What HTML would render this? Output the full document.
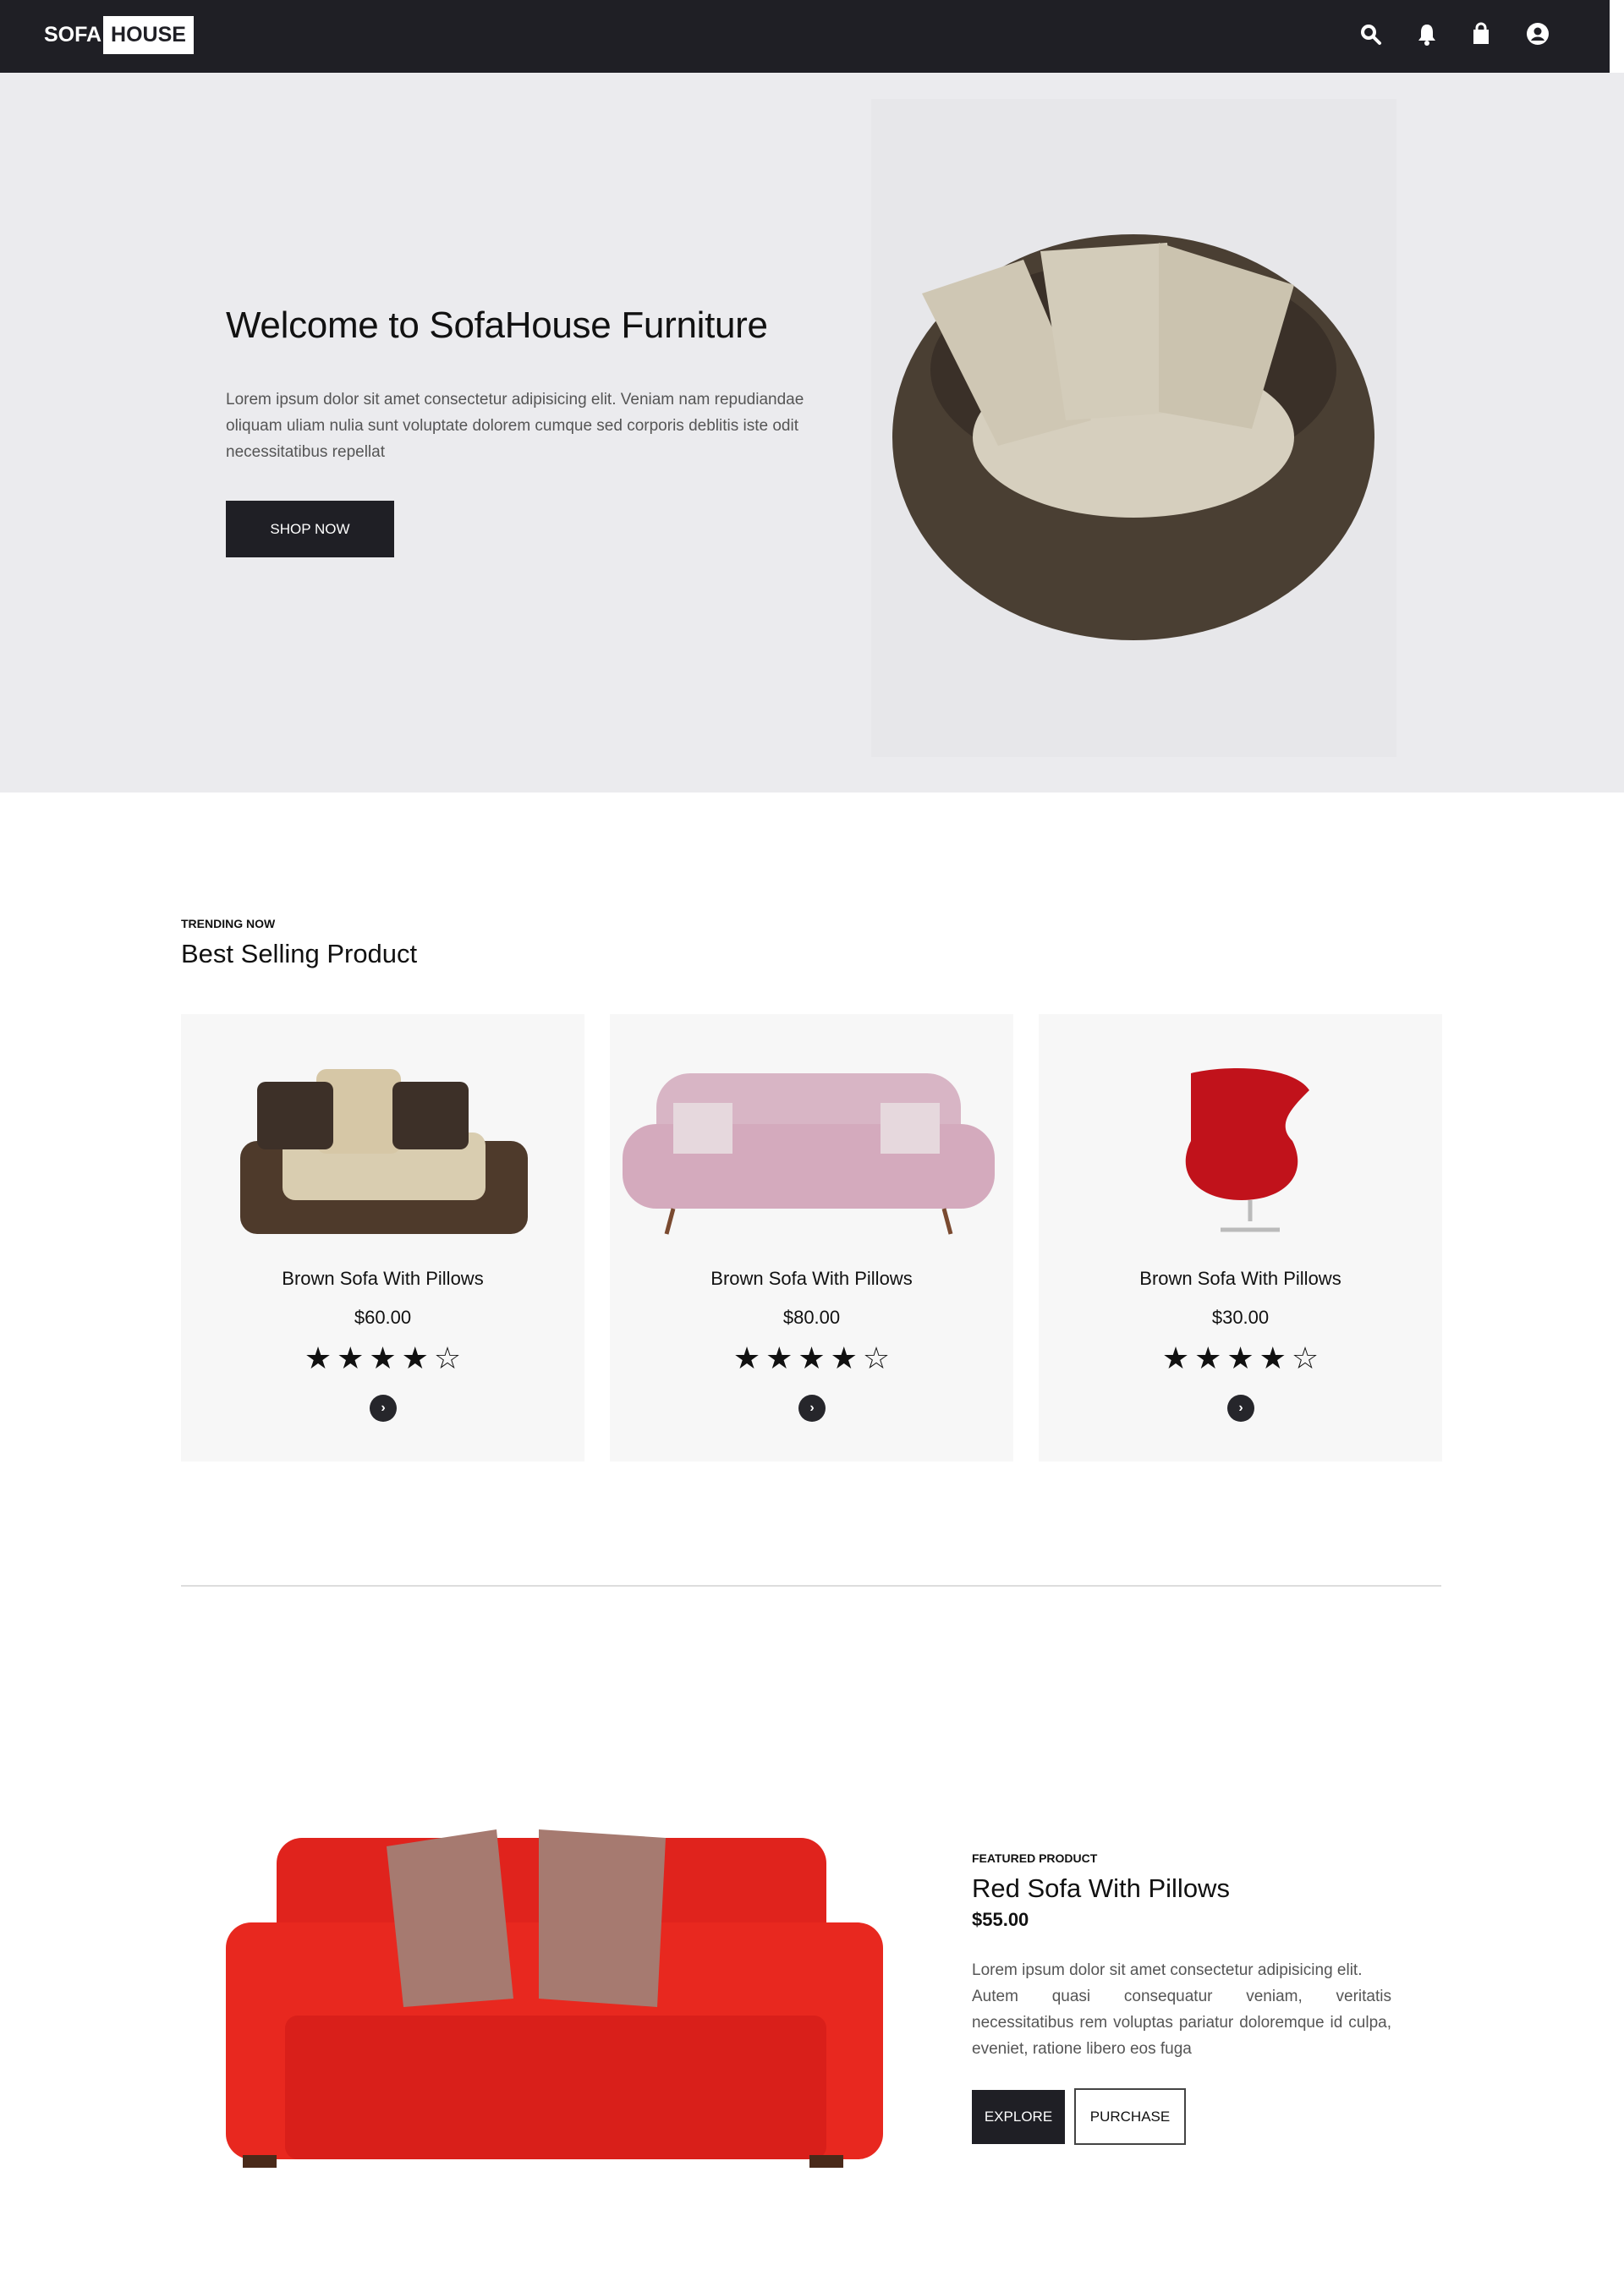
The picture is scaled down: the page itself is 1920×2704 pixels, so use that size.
<!DOCTYPE html>
<html><head><meta charset="utf-8"><style>
*{margin:0;padding:0;box-sizing:border-box}
body{width:1920px;height:2704px;background:#fff;font-family:"Liberation Sans",sans-serif;color:#111;position:relative;overflow:hidden}
.abs{position:absolute}
nav{position:absolute;left:0;top:0;width:1903px;height:86px;background:#1f1f25}
.hero{position:absolute;left:0;top:86px;width:1920px;height:851px;background:#ebebee}
p.lorem{color:#555;font-size:19px;line-height:31px}
.card{position:absolute;top:1199px;width:477px;height:529px;background:#f7f7f7;text-align:center}
.card h4{position:absolute;top:300px;width:100%;font-size:22px;font-weight:normal}
.card .pr{position:absolute;top:346px;width:100%;font-size:22px}
.card .st{position:absolute;top:386px;width:100%;font-size:36px;letter-spacing:6px;padding-left:6px}
.card .ar{position:absolute;top:450px;left:223px;width:32px;height:32px;border-radius:50%;background:#26262b;color:#fff;font-size:16px;line-height:31px;font-weight:bold}
.btn{position:absolute;font-size:17px;text-align:center}
</style></head><body>
<nav>
<div class="abs" style="left:52px;top:27px;color:#fff;font-weight:bold;font-size:25px">SOFA</div>
<div class="abs" style="left:122px;top:19px;width:107px;height:45px;background:#fff;color:#1f1f25;font-weight:bold;font-size:25px;line-height:45px;text-align:center">HOUSE</div>
<svg class="abs" style="left:1608px;top:28px" width="26" height="26" viewBox="0 0 26 26"><circle cx="10" cy="10" r="7" stroke="#fff" stroke-width="4" fill="none"/><path d="M15 15l8 8" stroke="#fff" stroke-width="4" stroke-linecap="round"/></svg>
<svg class="abs" style="left:1675px;top:27px" width="24" height="28" viewBox="0 0 24 28"><path d="M12 2c-5 0-7 4-7 9v6l-3 4h20l-3-4v-6c0-5-2-9-7-9z" fill="#fff"/><circle cx="12" cy="24" r="3" fill="#fff"/></svg>
<svg class="abs" style="left:1739px;top:26px" width="24" height="28" viewBox="0 0 24 28"><path d="M3 9h18v17H3z" fill="#fff"/><path d="M7 11V7a5 5 0 0110 0v4" stroke="#fff" stroke-width="3" fill="none"/></svg>
<svg class="abs" style="left:1805px;top:27px" width="26" height="26" viewBox="0 0 26 26"><circle cx="13" cy="13" r="13" fill="#fff"/><circle cx="13" cy="10" r="4.5" fill="#1f1f25"/><path d="M5 21c3-6 13-6 16 0" fill="#1f1f25"/></svg>
</nav>
<div class="hero">
<div class="abs" style="left:267px;top:274px;font-size:44px;color:#111;letter-spacing:-0.3px">Welcome to SofaHouse Furniture</div>
<p class="lorem abs" style="left:267px;top:371px;width:730px">Lorem ipsum dolor sit amet consectetur adipisicing elit. Veniam nam repudiandae oliquam uliam nulia sunt voluptate dolorem cumque sed corporis deblitis iste odit necessitatibus repellat</p>
<div class="btn" style="left:267px;top:506px;width:199px;height:67px;background:#1f1f25;color:#fff;line-height:67px">SHOP NOW</div>
<div class="abs" style="left:1030px;top:31px;width:621px;height:778px;background:#e7e7ea">
<svg width="621" height="778" viewBox="0 0 621 778">
<ellipse cx="310" cy="400" rx="285" ry="240" fill="#4a3f33"/>
<ellipse cx="310" cy="320" rx="240" ry="130" fill="#3a3028"/>
<ellipse cx="310" cy="400" rx="190" ry="95" fill="#d6cfbe"/>
<path d="M60 230l120-40 80 190-110 30z" fill="#cfc7b4"/>
<path d="M200 180l150-10 20 200-140 10z" fill="#d3ccba"/>
<path d="M340 170l160 50-50 170-110-20z" fill="#cbc3af"/>
</svg></div>
</div>
<div class="abs" style="left:214px;top:1084px;font-size:14px;font-weight:bold">TRENDING NOW</div>
<div class="abs" style="left:214px;top:1110px;font-size:31px">Best Selling Product</div>

<div class="card" style="left:214px">
<svg class="abs" style="left:60px;top:60px" width="360" height="210"><rect x="10" y="90" width="340" height="110" rx="20" fill="#4e3a2b"/><rect x="60" y="80" width="240" height="80" rx="15" fill="#d9cdb0"/><rect x="100" y="5" width="100" height="100" rx="12" fill="#d6c7a6"/><rect x="30" y="20" width="90" height="80" rx="10" fill="#3d3028"/><rect x="190" y="20" width="90" height="80" rx="10" fill="#3d3028"/></svg>
<h4>Brown Sofa With Pillows</h4><div class="pr">$60.00</div><div class="st">★★★★☆</div><div class="ar">›</div></div>
<div class="card" style="left:721px">
<svg class="abs" style="left:15px;top:60px" width="445" height="210"><rect x="40" y="10" width="360" height="110" rx="40" fill="#d8b5c5"/><rect x="0" y="70" width="440" height="100" rx="40" fill="#d4aabd"/><path d="M60 170l-8 30M380 170l8 30" stroke="#7a4a30" stroke-width="5"/><rect x="60" y="45" width="70" height="60" fill="#e6d8dd"/><rect x="305" y="45" width="70" height="60" fill="#e6d8dd"/></svg>
<h4>Brown Sofa With Pillows</h4><div class="pr">$80.00</div><div class="st">★★★★☆</div><div class="ar">›</div></div>
<div class="card" style="left:1228px">
<svg class="abs" style="left:160px;top:60px" width="180" height="210"><path d="M20 10c40-10 120-10 140 20-20 20-40 40-20 60 20 40-10 70-60 70-50 0-80-30-60-70z" fill="#c1121b"/><path d="M90 160v25M55 195h70" stroke="#bbb" stroke-width="5"/></svg>
<h4>Brown Sofa With Pillows</h4><div class="pr">$30.00</div><div class="st">★★★★☆</div><div class="ar">›</div></div>

<div class="abs" style="left:214px;top:1874px;width:1490px;height:2px;background:#ddd"></div>

<svg class="abs" style="left:267px;top:2153px" width="777" height="417" viewBox="0 0 777 417"><rect x="60" y="20" width="650" height="250" rx="30" fill="#e0231d"/><rect x="0" y="120" width="777" height="280" rx="30" fill="#e8281f"/><rect x="70" y="230" width="640" height="170" rx="15" fill="#d91f1a"/><path d="M190 30l130-20 20 200-130 10zM370 10l150 10-10 200-140-10z" fill="#a67a70"/><rect x="20" y="395" width="40" height="15" fill="#4a2a1a"/><rect x="690" y="395" width="40" height="15" fill="#4a2a1a"/></svg>

<div class="abs" style="left:1149px;top:2189px;font-size:14px;font-weight:bold">FEATURED PRODUCT</div>
<div class="abs" style="left:1149px;top:2215px;font-size:31px">Red Sofa With Pillows</div>
<div class="abs" style="left:1149px;top:2257px;font-size:22px;font-weight:bold">$55.00</div>
<p class="lorem abs" style="left:1149px;top:2314px;width:496px;text-align:justify">Lorem ipsum dolor sit amet consectetur adipisicing elit.<br><span style="display:block;text-align:justify;text-align-last:justify">Autem quasi consequatur veniam, veritatis</span>necessitatibus rem voluptas pariatur doloremque id culpa, eveniet, ratione libero eos fuga</p>
<div class="btn" style="left:1149px;top:2471px;width:110px;height:64px;background:#1f1f25;color:#fff;line-height:64px">EXPLORE</div>
<div class="btn" style="left:1270px;top:2469px;width:132px;height:67px;border:2px solid #444;line-height:63px">PURCHASE</div>
</body></html>
